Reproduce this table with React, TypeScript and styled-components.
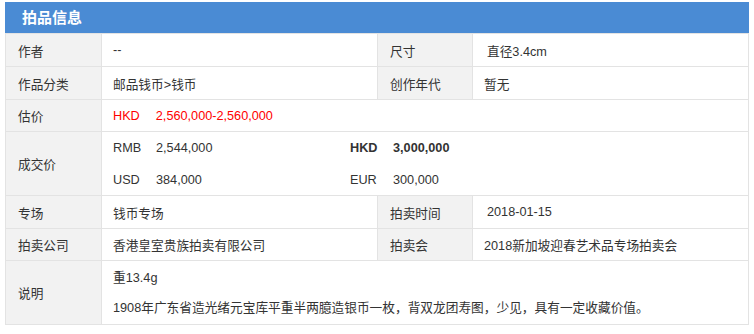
import styled, { createGlobalStyle } from 'styled-components';

const GlobalStyle = createGlobalStyle`
  body {
    margin: 0;
    background: #ffffff;
    font-family: 'Liberation Sans', 'Noto Sans CJK SC', Arial, sans-serif;
    font-size: 12.7px;
    color: #333333;
  }
`;

const deals = [
  { currency: 'RMB', amount: '2,544,000' },
  { currency: 'HKD', amount: '3,000,000', strong: true },
  { currency: 'USD', amount: '384,000' },
  { currency: 'EUR', amount: '300,000' },
];

export default function App() {
  return (
    <>
      <GlobalStyle />
      <Panel>
        <Header>拍品信息</Header>
        <Table>
          <colgroup>
            <col style={{ width: 96 }} />
            <col style={{ width: 276 }} />
            <col style={{ width: 95 }} />
            <col />
          </colgroup>
          <tbody>
            <Row h={33}>
              <Label>作者</Label>
              <Value>--</Value>
              <Label>尺寸</Label>
              <Value wide>直径3.4cm</Value>
            </Row>
            <Row h={33}>
              <Label>作品分类</Label>
              <Value>邮品钱币&gt;钱币</Value>
              <Label>创作年代</Label>
              <Value>暂无</Value>
            </Row>
            <Row h={32}>
              <Label>估价</Label>
              <Value colSpan={3}>
                <Estimate>
                  <span>HKD</span>
                  <span>2,560,000-2,560,000</span>
                </Estimate>
              </Value>
            </Row>
            <Row h={64}>
              <Label>成交价</Label>
              <Value colSpan={3}>
                <DealGrid>
                  {deals.map((d) => (
                    <Deal key={d.currency} strong={d.strong}>
                      <Currency>{d.currency}</Currency>
                      <span>{d.amount}</span>
                    </Deal>
                  ))}
                </DealGrid>
              </Value>
            </Row>
            <Row h={33}>
              <Label>专场</Label>
              <Value>钱币专场</Value>
              <Label>拍卖时间</Label>
              <Value wide>2018-01-15</Value>
            </Row>
            <Row h={32}>
              <Label>拍卖公司</Label>
              <Value>香港皇室贵族拍卖有限公司</Value>
              <Label>拍卖会</Label>
              <Value>2018新加坡迎春艺术品专场拍卖会</Value>
            </Row>
            <Row h={64}>
              <Label>说明</Label>
              <Value colSpan={3}>
                <Note>重13.4g</Note>
                <Note>1908年广东省造光绪元宝库平重半两臆造银币一枚，背双龙团寿图，少见，具有一定收藏价值。</Note>
              </Value>
            </Row>
          </tbody>
        </Table>
      </Panel>
    </>
  );
}

const Panel = styled.div`
  margin: 2px 0 0 5px;
  width: 744px;
`;

const Header = styled.div`
  height: 31px;
  background: #4a8bd4;
  color: #ffffff;
  font-size: 15px;
  font-weight: bold;
  line-height: 31px;
  padding-left: 17px;
`;

const Table = styled.table`
  width: 100%;
  border-collapse: collapse;
  table-layout: fixed;
  border: 1px solid #e3e3e3;
  border-top: none;
`;

const Row = styled.tr<{ h: number }>`
  height: ${({ h }) => h}px;
`;

const Label = styled.td`
  background: #f2f2f2;
  border: 1px solid #e3e3e3;
  padding: 0 12px;
  vertical-align: middle;
  white-space: nowrap;
`;

const Value = styled.td<{ wide?: boolean }>`
  border: 1px solid #e3e3e3;
  padding: 0 ${({ wide }) => (wide ? '14px' : '11px')};
  vertical-align: middle;
  white-space: nowrap;
`;

const Estimate = styled.div`
  display: flex;
  gap: 16px;
  color: #ff0000;
`;

const DealGrid = styled.div`
  display: grid;
  grid-template-columns: 237px 237px;
  grid-auto-rows: 31px;
  row-gap: 1px;
  align-items: center;
`;

const Deal = styled.div<{ strong?: boolean }>`
  display: flex;
  font-weight: ${({ strong }) => (strong ? 'bold' : 'normal')};
`;

const Currency = styled.span`
  width: 43px;
`;

const Note = styled.div`
  line-height: 30px;
`;
